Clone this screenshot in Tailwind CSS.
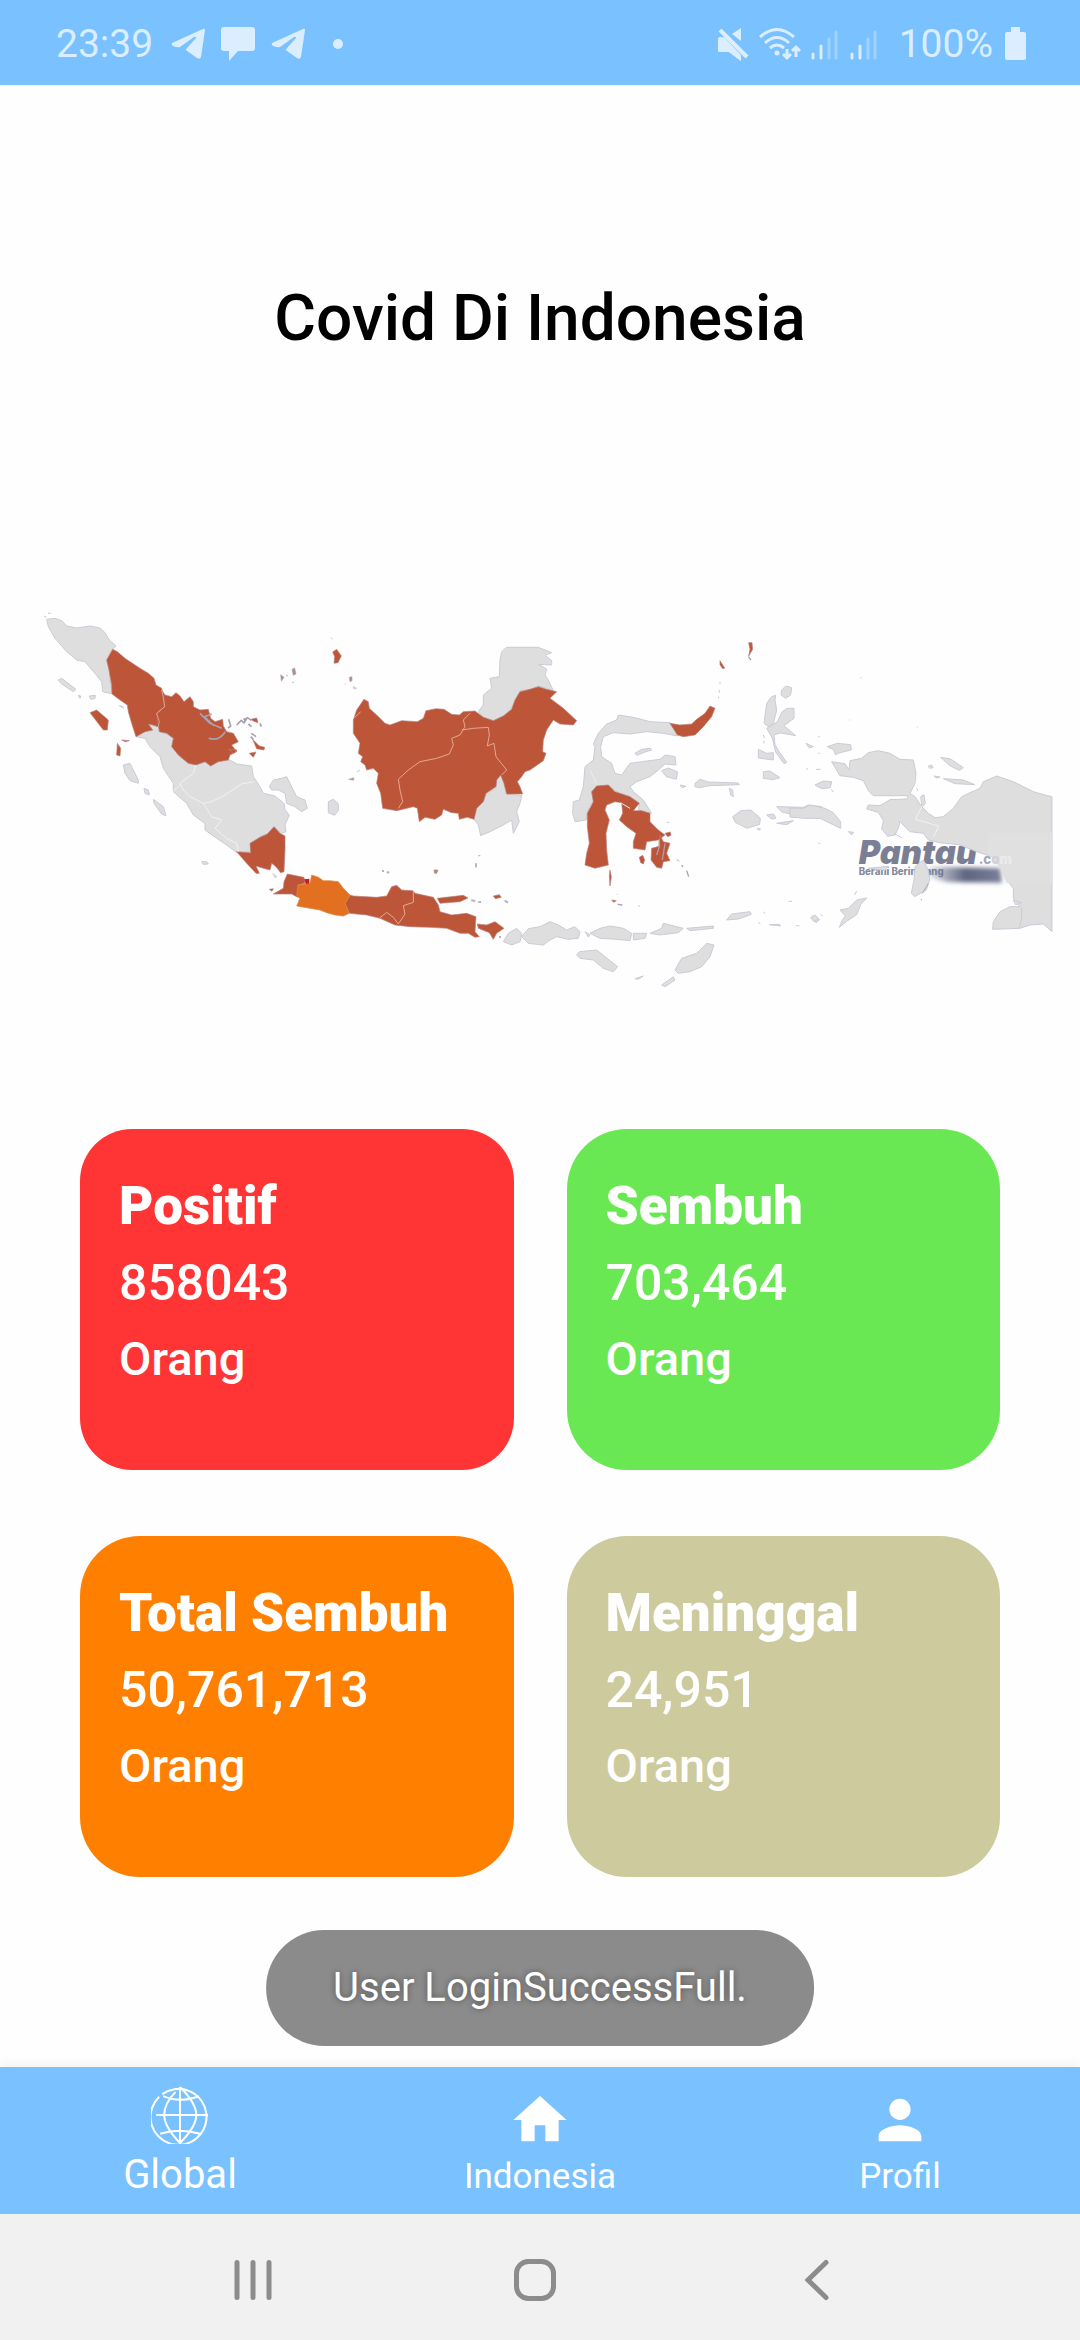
<!DOCTYPE html>
<html lang="id">
<head>
<meta charset="utf-8">
<meta name="viewport" content="width=device-width, initial-scale=1">
<title>Covid Di Indonesia</title>
<script src="https://cdn.jsdelivr.net/npm/@tailwindcss/browser@4"></script>
</head>
<body class="flex min-h-screen flex-col bg-[#fefefe] font-[Roboto,sans-serif]">

<!-- Status bar -->
<header class="flex h-[85px] items-center justify-between bg-[#79c1ff] pt-[2px] pr-[54px] pl-14 text-[#daeeff]">
  <div class="flex items-center">
    <time class="text-[39px] leading-[48px]">23:39</time>
    <svg class="ml-[18px] h-[34px] w-[34px]" viewBox="0 0 34 34" fill="currentColor"><path d="M1 16 32 2q2-1 2 1l-4 27q-1 3-4 1l-10-7q-2-1 0-3l9-10q0-2-2-1L9 20q-2 1-7-1-2-1-1-3z"/></svg>
    <svg class="ml-4 h-[34px] w-[34px]" viewBox="0 0 34 34" fill="currentColor"><path d="M3 0h28q3 0 3 3v18q0 3-3 3H17l-9 10V24H3q-3 0-3-3V3q0-3 3-3z"/></svg>
    <svg class="ml-4 h-[34px] w-[34px]" viewBox="0 0 34 34" fill="currentColor"><path d="M1 16 32 2q2-1 2 1l-4 27q-1 3-4 1l-10-7q-2-1 0-3l9-10q0-2-2-1L9 20q-2 1-7-1-2-1-1-3z"/></svg>
    <span class="ml-7 size-[10px] rounded-full bg-current"></span>
  </div>
  <div class="flex items-center">
    <svg class="h-[34px] w-[31px]" viewBox="0 0 31 34" fill="currentColor"><path d="M2 10h4l17 18v6L11 25H2q-2 0-2-2V12q0-2 2-2zM23 1v13l-9-7z"/><path d="M2 3 29 30" fill="none" stroke="#79c1ff" stroke-width="7"/><path d="M2 3 29 30" fill="none" stroke="currentColor" stroke-width="4"/><path d="M0 13l6-3 17 18v6L11 25H2q-2 0-2-2z"/></svg>
    <svg class="ml-[10px] h-[34px] w-[42px]" viewBox="0 0 42 34" fill="none" stroke="currentColor" stroke-width="3"><path d="M1 10Q18-5 35 10M6 16Q18 5 30 16M11 21q7-6 14 0"/><circle cx="18" cy="26" r="2.5" fill="currentColor" stroke="none"/><path d="M28 22v9m-4-4 4 4 4-4M37 30V20m-4 4 4-4 4 4"/></svg>
    <svg class="ml-[10px] h-[34px] w-[27px]" viewBox="0 0 27 34" stroke="currentColor" stroke-width="3" stroke-linecap="round"><path d="M2 27v4M10 19v12"/><path d="M18 12v19M25 5v26" opacity=".4"/></svg>
    <svg class="ml-3 h-[34px] w-[27px]" viewBox="0 0 27 34" stroke="currentColor" stroke-width="3" stroke-linecap="round"><path d="M2 27v4M10 19v12"/><path d="M18 12v19M25 5v26" opacity=".4"/></svg>
    <span class="ml-[22px] text-[39px] leading-[48px]">100%</span>
    <svg class="ml-3 h-[34px] w-[21px]" viewBox="0 0 21 34" fill="currentColor"><path d="M6 0h9v5h4q2 0 2 2v24q0 2-2 2H2q-2 0-2-2V7q0-2 2-2h4z"/></svg>
  </div>
</header>

<main class="grow">
  <h1 class="pt-[194px] text-center text-[64px] leading-[80px] font-medium text-black">Covid Di Indonesia</h1>

  <!-- Map of the provinces -->
  <svg class="mt-[241px] block w-full" viewBox="0 600 1080 400" role="img" aria-label="Peta Indonesia">
    <defs>
      <filter id="soft" x="-20%" y="-60%" width="140%" height="220%"><feGaussianBlur stdDeviation="7"/></filter>
      <linearGradient id="smear"><stop offset="0" stop-color="#6b718c" stop-opacity=".2"/><stop offset=".5" stop-color="#5f6580"/><stop offset="1" stop-color="#7b809a"/></linearGradient>
    </defs>

    <!-- Watermark -->
    <g transform="translate(800 650) scale(.33333)">
      <text x="176" y="643" font-family="Inter, sans-serif" font-weight="900" font-style="italic" font-size="98" fill="#7a7f95">Pantau</text>
      <text x="176" y="676" font-family="Inter, sans-serif" font-weight="800" font-size="29" fill="#858a9f">Berani Berimbang</text>
      <path d="M390 650 600 655 606 698 440 696 385 680z" fill="url(#smear)" filter="url(#soft)"/>
    </g>

    <!-- Sumatra -->
    <g transform="translate(30 590) scale(.33333)" stroke-width="3" stroke-linejoin="round">
      <g fill="#dedede" stroke="#c9ccd6">
        <path d="M50 88 75 85 95 92 110 108 140 114 180 108 210 114 225 128 238 150 258 168 245 180 230 210 238 240 240 270 248 312 218 305 215 275 195 250 165 215 140 210 110 185 75 145 55 110z"/>
        <path d="M318 440 345 425 368 422 355 402 385 410 388 425 410 432 430 445 428 470 450 500 475 520 498 525 525 515 542 528 565 515 600 510 620 522 665 528 670 560 690 590 700 610 735 618 762 640 765 660 778 675 765 705 768 725 755 730 732 710 715 730 690 740 662 760 662 785 620 788 590 765 560 745 525 720 525 700 490 675 470 640 430 605 430 580 400 535 390 500 360 470 345 445z"/>
        <path d="m718 590 12-20 25-5 15-5 10 20 10 20 10 20 25 10 7 25-17 10-20-15-25-10-5-30-20-10-20 0z"/>
        <path d="m85 270 10-5 43 33-8 7-35-23zM280 525l20-5 25 50v10l-25-8-15-22zM342 595l13 5 3 15-13-5zM370 628l30 22 8 28-13-6-23-32zM515 815h15l5 7-15 1zM178 318l18-2-1 9-13 3zM268 347l10 2 2 6zM146 316l6 2-1 6-4-1zM42 78l8 4M54 70h8M728 850l8 14 6-6"/>
      </g>
      <g fill="#bd5638" stroke="#b8807a" stroke-width="2">
        <path d="m248 178 14 7 23 20 45 30 25 15 17 15 6 20 17 10 5 25 4 30-24 20 8 25-3 15-17-5-13-3 13 18-23 5-27 15-13-40-10-35-3-20-22-15-24-18-1-27-8-45-7-30z"/>
        <path d="m395 300 10 15 20 5 13-12 12 10 12 17 18-15 10 15v15l20 10 25-2 7 27 13 10 23-7 2 20 10 17 20 5 15 25-20 10 15 20-20 10-5 15-30 5-23 13-17-13-27 10-23-5-30-25-20-25 5-25-20-15-22-5-3-20-5-35 24-20z"/>
        <path d="m620 785 42 3-2-28 30-18 22-10 20-22 18 20 15 8v42l-3 65-10 3-14-18-13-10-5 20-20-5-22-7 10 22h-10l-28-30z"/>
        <path d="m180 368 20-8 35 30-3 30h-12zM262 460l10 15-2 23-10-3zM275 450l23 2-12 3zM662 388l18-4 4 14-12-4zM668 448l20 20 16 4-2 8-22-4zM658 490l20-4-8 16zM595 478l26 2-10 10z"/>
        <path d="m752 254 10 8-8 12zM786 238l8-4 4 18-8 4zM640 386l12-2-8 10z" fill="#a98c90" stroke="#b8a9b2"/>
      </g>
      <path d="M510 370l30 30 35 15M545 372l-22 8 30 28M536 445q30 10 50-20M596 388l6 20-8 6M620 405l14-14 8 8 10-16 12 8M655 402l10 8M664 430l14 10M690 400l4 10M662 440l8 8M770 258l2-2M788 276l2 2" fill="none" stroke="#a8a2b0" stroke-width="5"/>
      <g fill="none" stroke="#f1f1f1" stroke-width="3">
        <path d="m498 525-8 25-40 30 10 20 20 20 40 20 25-5 40-20 15-10 35-23 37-7M520 640l25 40 30 10-20 25 35 30 30 15 5 25M450 585l-20 18"/>
        <path d="m395 300 5 20 4 30-24 20 8 25-3 15" stroke="#e8b9a8" stroke-width="2"/>
      </g>
    </g>

    <!-- Kalimantan -->
    <g transform="translate(330 620) scale(.33333)" stroke-width="3" stroke-linejoin="round">
      <g fill="#dedede" stroke="#c9ccd6">
        <path d="m530 82 95 0 40 16-20 8 20 16v13l-40-2 25 14-5 18 10 15 15 32-20-7-25-7-25 10-30 4-15 33-15 25-20 18-30 14-30-10-15-17 15-20 0-30 25-20-5-30 28-5 2-50 5-25z"/>
        <path d="m512 465 10 25 8 32 45 5-5 23-10 25 8 30-18 35-5-40-25 15-40 20-28 12-7-32-13-17 8-33 20-20 8-25 30-15 2-25z"/>
        <path d="m-5 545 15-7 14 12 2 20-12 16-19-8zM2 52l6 6M44 190l4 3M70 200l10 5-8 2zM80 456l10-6"/>
      </g>
      <g fill="#bd5638" stroke="#b8807a" stroke-width="2">
        <path d="m102 238 13 7 3 20 22 20 25 25 15 5 35-13 47 3 18-10 8-23 30-6 24 2 23 15 23 2 12-10 35-2 25 19 30 10 30-14 25-20 10-28 15-25 30-7 25-8 25 8 30 7-20 20 40 30 40 37-10 13-40-3-20-12-20 30-10 30-2 35 10 5-8 22-40 28-15 5-10 15-13 15 8 15 8 22-48 0-8-32-10-25-12 15-2 20-30 20-8 25-20 20-8 33-20-6-24 6-3-18-20-2-25-10-5 17-20 13-30-6-17 13-6-40-12-5-50 12-42-7-6-45-12-30 5-30-15-15-20 5-5-15-13-10 6-15-13-10 5-30-20-30 0-40 10-30z"/>
        <path d="m8 96 12-8 14 20-10 20-12 2 2-20z"/>
        <path d="M56 478l16-5-2 8zM58 172l8-2v12l-6 3z" fill="#a98c90" stroke="#b8a9b2"/>
      </g>
      <path d="m420 280-20 20 5 20-15 25-25 10 5 20-12 27-38 13-50 10-35 25-30 28 5 32 8 35-13 20M395 330l35-5 45-3 3 23-6 33 20-8 6 40 32 40-15 15M72 295l20-20" fill="none" stroke="#e3a892" stroke-width="3"/>
    </g>

    <!-- Java and Bali -->
    <g transform="translate(230 820) scale(.33333)" stroke="#b8807a" stroke-width="2" stroke-linejoin="round">
      <g fill="#bd5638">
        <path d="m172 162 50 10 3 18-20 5v20l-5 15-15-8-55 0 30-17 2-20zM118 208l12-2-4 8z"/>
        <path d="m360 225 10 3 70 4 30-4 15-28 15-4 15 14 33 2 7 8 55 12 15 23 5 20 35 10 45-5 28 10-3 45 13 15-13 2-20-12-25 0-40-15-50-3-60-2-45-5-45-20-40-10-52-5-13-30z"/>
        <path d="m622 235 78-9 14 8-24 11-60 5zM742 312l28 3 25-10 27 20-22 15-10 18-12-20-33-13zM790 228l18-4 6 8-18 4z"/>
        <path d="M612 150h12l-4 10h-6z" fill="#a98c90"/>
      </g>
      <path d="m240 190 5-25 20 7 15 10 20 0 25 3 15 20 20 20-15 25 13 30-18 8-25-3-25-7-20-8-70-12 10-23-10-5 3-35 22-3z" fill="#e37020" stroke="#d6893f"/>
      <path d="m222 178 16-2v14l-10 3z" fill="#c41e25" stroke="none"/>
      <path d="M550 212v35l-30 10 5 25-20 30-15-20-20-15-22 18" fill="none" stroke="#e3a892" stroke-width="3"/>
      <path d="M724 240l12 4M745 246h8M824 242l10 6M456 153h6M470 156l8 2M738 130v12M748 105v4M810 348v6" fill="none" stroke="#b4b4c2" stroke-width="6"/>
    </g>

    <!-- Sulawesi, Nusa Tenggara and North Maluku -->
    <g transform="translate(550 620) scale(.33333)" stroke-width="3" stroke-linejoin="round">
      <g fill="#dedede" stroke="#c9ccd6">
        <path d="m130 420 5-40-5-8 15-32 25-28 30-12 5-15 45 7 50 13 60 3 20 17 2 23-42-8-50-5-50 7-50-4-30 12-8 30 3 30 30 20 10 30 20 5 25-35 35-5 55-7 15-13 30 5 3 25-33-3-20 18-25 20-40 15-20 15 10 15 30 25 25 40-40-10 3-20-28-20-30-10-25-15-10-10-35 5-15 15 5 30-12 15-10 40-33 5-7-25 2-35 18-5 12-40 5-60z"/>
        <path d="m255 400 20-12 25-3 5 5-20 6-25 10zM335 452l20-8 28 12-4 22-30-8zM390 495l18 4-12 4zM435 490l15-12 25 8 90 3 3 5-90 3-30 6-13-3zM538 505l10 5 2 20-8-4zM548 590l25-18 30-2 28 25-2 18-38 12-35-18zM622 625l10 2-6 4zM650 585l20-3 8 12-12 4zM680 560l80 2 15-7 40 5 0 34-60-4-60-14zM680 610l50-8-20 12z"/>
        <path d="m-140 965 15-25 25-15 15 15-5 25-25 10zM-85 950l20-24 35-6 30-15 25 10 25 15 25-10 15 15-5 20-30 3-35-8-20 10-20 15-45-5zM105 935l15 10-5 6zM120 940l30-15 30-7 40 7 25 15-5 22-40-4-50-3zM250 940l40 0-5 15-35 5zM300 940l35-15 5-15 60 15-15 13-55 7zM410 925l80-7v7l-70 7z"/>
        <path d="m80 1005 8-10 52-5 25 20 38 30-13 15-30-10-30-25-40-5zM375 1050l20-35 45-15 30-30 22 5-12 35-25 30-35 15-35 5zM335 1095l35-25 5 10-30 20zM255 1076l25-8-15 10zM530 900l15-18 55-7 4 8-38 14zM640 876l6 4M625 908l6 2M658 914l30-1 4 5zM738 916l10 2M716 844h10M786 888l14 2 8 10-10 8z"/>
        <path d="m650 250 15-20 12-4-2 14 5 30-10 40-15 10-13-10zM695 210l12-12 18 5-3 22-15 10-14-10zM650 325l32-20 15-30 15-10 20 0v30l-30 22 35 30-45-8-20 5 3 30 15 25 20 28-8 4-25-35-10-42zM625 388l25 12 20-2v22l-45-6zM640 455l20-2 30 20-22 6-28-4zM640 345l4 10M642 362v8"/>
        <path d="m350 606 8 2M200 822l3 2M264 855l6 6M510 185v8M508 210v8M506 230v5"/>
      </g>
      <g fill="#bd5638" stroke="#b8807a" stroke-width="2">
        <path d="m360 310 30 5 35-3 15-14 25-18 15-22 15 7-10 25-25 30-25 25-35 5-18-5z"/>
        <path d="m125 515 15-17 35-3 20 20 45 15 28 20-18 22 25 0 25 8v25l25 25 20 15-20 15-35 5-5 25-35-5v-20l8-25-28-20-22-20 10-20-3-32-20-3-25 10-5 15 13 30-10 40 2 50 5 45-40 10-30-10 5-35 8-30-6-50v-40l18-35z"/>
        <path d="m305 685 22-6 3-34 10 20 20 5-10 30 10 22-20 3-5 20-15-3-17-22zM345 640l16-4 2 10-10 4zM268 712l10-6 6 14-4 12-8-4zM180 750l4 20-4 28-2-30zM380 718l8 6M185 840l14 2-8 5zM596 68h10l2 20-12 20 4-20zM510 122l14 22-6 2-8-12z"/>
      </g>
      <path d="M328 660v20l-8 25M345 670l-8 50M395 735l4 6M410 752l6 18M203 853l14 2M595 110l8 10" fill="none" stroke="#a8a2b0" stroke-width="4"/>
      <path d="m215 550 25 15M120 450l20 40" fill="none" stroke="#ececec" stroke-width="3"/>
    </g>

    <!-- Papua and Maluku -->
    <g transform="translate(800 650) scale(.33333)" fill="#dedede" stroke="#c9ccd6" stroke-width="3" stroke-linejoin="round">
      <path d="m95 335 40 6 12 18 3-27 35-7 20-17 30-6 35 8 30 18 40 2 8 40-3 30-15 30 15 10 20 30 20 20 20 13 25-3 30-25 25-35 25-12 30-13 10-20 40-17 50 17 60 30 35 10 21 5v405l-26-23-40 3-30 10-82 3 2-23 20-30 30-15 30 0-20-25 0-30-20-25-20-40-25-30-45-15-50-20-60-7-35-8-15-20-40-5-30-30-5 20-10 20-22 4-18-22 5-25-15-25-35-10 5-12 35 2 30-18 50-2 5-10-105 0-15-15-15-30-30-10-40-5-15-25z"/>
      <path d="M565 548h191v152H620l-20-50-25-30-10-4z" fill="#e0e0e0" stroke="none"/>
      <text x="536" y="643" font-family="Inter, sans-serif" font-weight="800" font-size="40" stroke="none"><tspan fill="#a4a8b8">.c</tspan><tspan fill="#d0d1d8">o</tspan><tspan fill="#ececec">m</tspan></text>
      <path d="M-30 474 10 475 30 465l45 10 25 13 22 27v20l-62-30-45 0-45-4z"/>
      <path d="m82 290 30-10 40 4 2 16-34 8-14 6-4-14zM45 405l25-12 25 2-4 18-26 3zM422 322l30 5 38 26-12 8-30-15zM430 386l60 4 35 14-60-3zM362 440l10-6 4 26-10 12zM385 348l10-3 4 8-10 2zM402 378l18 3-10 3zM145 545l16 2-6 8zM18 280l22 10-12 4zM48 358h14M18 357h6M54 260h5M54 310h5M350 415l4 8M94 418l6 8M282 550l24 14M55 580h6M183 82v4M148 210h3M352 230v3"/>
      <path d="m345 650 25-20 15 30 4 30-10 30-35 20-10-10 8-40zM120 780l25-5 25-25 30-6-18 20-12 30-30 20-22 18 8-20 10-14zM164 735l6-12M32 803l14-8 10 12-14 8zM62 793l6 6M205 655l60-6-10 12zM640 750l25 8-18 6z"/>
      <path d="M368 465l-22 43 70 20-15 32" fill="none" stroke="#f1f1f1"/>
      <path d="M665 775v30l-8 32" fill="none"/>
      <path d="M385 700l-18 30M362 748l4 2" fill="none" stroke="#a8aabc"/>
    </g>
  </svg>

  <!-- Figures -->
  <section class="mt-[129px] grid grid-cols-2 gap-x-[53px] gap-y-[66px] px-20 pb-14 text-white">
    <article class="h-[341px] rounded-[52px] bg-[#ff3535] px-[39px] pt-[39px]">
      <h2 class="text-[53px] leading-[77px] font-black">Positif</h2>
      <p class="text-[50px] leading-[76px] font-medium">858043</p>
      <p class="text-[47px] leading-[76px] font-medium">Orang</p>
    </article>
    <article class="h-[341px] rounded-[60px] bg-[#6ae854] px-[39px] pt-[39px]">
      <h2 class="text-[53px] leading-[77px] font-black">Sembuh</h2>
      <p class="text-[50px] leading-[76px] font-medium">703,464</p>
      <p class="text-[47px] leading-[76px] font-medium">Orang</p>
    </article>
    <article class="h-[341px] rounded-[60px] bg-[#ff8000] px-[39px] pt-[39px]">
      <h2 class="text-[53px] leading-[77px] font-black">Total Sembuh</h2>
      <p class="text-[50px] leading-[76px] font-medium">50,761,713</p>
      <p class="text-[47px] leading-[76px] font-medium">Orang</p>
    </article>
    <article class="h-[341px] rounded-[60px] bg-[#cdca9e] px-[39px] pt-[39px]">
      <h2 class="text-[53px] leading-[77px] font-black">Meninggal</h2>
      <p class="text-[50px] leading-[76px] font-medium">24,951</p>
      <p class="text-[47px] leading-[76px] font-medium">Orang</p>
    </article>
  </section>
</main>

<footer class="relative">
  <!-- Toast -->
  <div role="status" class="absolute bottom-full left-1/2 mb-[21px] -translate-x-1/2 rounded-full bg-[#8b8b8b] px-[67px] py-[34px] text-[40px] leading-[48px] whitespace-nowrap text-white text-shadow-[0_0_6px_rgb(0_0_0/0.4)]">User LoginSuccessFull.</div>

  <!-- Tab bar -->
  <nav class="grid h-[147px] grid-cols-3 bg-[#79c1ff] text-white shadow-[0_-2px_12px_rgb(0_0_0/0.06)]">
    <a href="#global" class="flex flex-col items-center justify-between pt-[19px] pb-[15px]">
      <svg class="size-[58px]" viewBox="0 0 57 57" fill="none" stroke="currentColor" stroke-width="2"><path d="M11 8A27.500 27.500 0 1 1 8 10.500M28.500 1v55M5 28.500h51M24 6q-11 11-11 22.500T28.500 56q16-16 16-27.500T28.500 1M12 10q16 7 35 0M9 47q19-6 39 0"/></svg>
      <span class="text-[40px] leading-[48px]">Global</span>
    </a>
    <a href="#indonesia" class="flex flex-col items-center justify-between pt-[21px] pb-[15px]">
      <svg class="size-[64px]" viewBox="0 0 24 24" fill="currentColor"><path d="M10 20v-6h4v6h5v-8h3L12 3 2 12h3v8z"/></svg>
      <span class="text-[35px] leading-[44px]">Indonesia</span>
    </a>
    <a href="#profil" class="flex flex-col items-center justify-between pt-[21px] pb-[15px]">
      <svg class="size-[64px]" viewBox="0 0 24 24" fill="currentColor"><path d="M12 12c2.210 0 4-1.790 4-4s-1.790-4-4-4-4 1.790-4 4 1.790 4 4 4zm0 2c-2.670 0-8 1.340-8 4v2h16v-2c0-2.660-5.330-4-8-4z"/></svg>
      <span class="text-[35px] leading-[44px]">Profil</span>
    </a>
  </nav>

  <!-- System navigation -->
  <div class="flex h-[126px] items-center justify-between bg-[#f1f1f1] pt-[6px] pr-[242px] pl-[232px] text-[#8c8c8c]">
    <button type="button" aria-label="Aplikasi terbaru"><svg class="size-[42px]" viewBox="0 0 42 42" stroke="currentColor" stroke-width="5" stroke-linecap="round"><path d="M5 3.500v35M21 3.500v35M37 3.500v35"/></svg></button>
    <button type="button" aria-label="Beranda"><svg class="size-[42px]" viewBox="0 0 42 42" fill="none" stroke="currentColor" stroke-width="5"><rect x="2.500" y="2.500" width="37" height="37" rx="12"/></svg></button>
    <button type="button" aria-label="Kembali"><svg class="size-[42px]" viewBox="0 0 42 42" fill="none" stroke="currentColor" stroke-width="5" stroke-linecap="round"><path d="M30 3.500 12 21l18 17.500"/></svg></button>
  </div>
</footer>
</body>
</html>
